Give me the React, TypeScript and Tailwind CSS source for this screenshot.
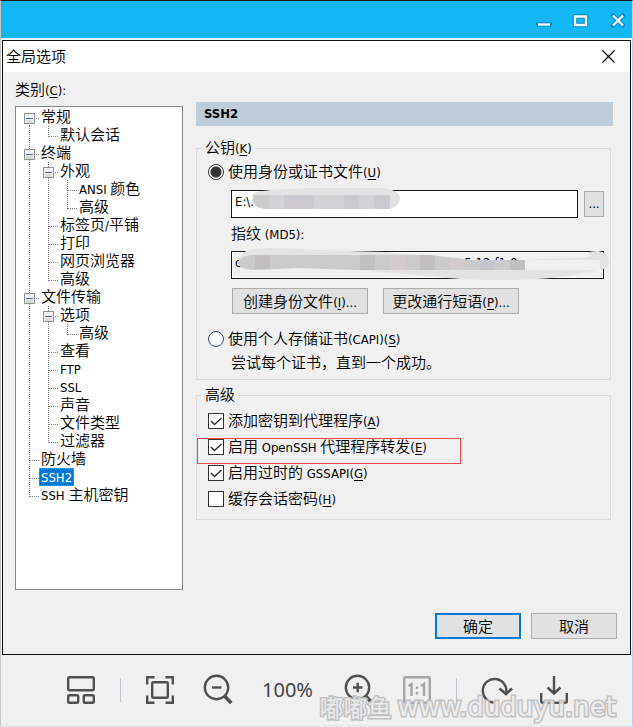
import { useState, type ReactNode } from 'react'

const CJK = "font-['Noto_Sans_CJK_SC','Noto_Sans',sans-serif]"
const LATIN = "font-['DejaVu_Sans_Condensed','DejaVu_Sans',sans-serif]"

interface TreeRow {
  label: string
  // one entry per column: v = line passes by, t = branch, l = last branch,
  // f = first expander, m = expander with a line above
  guides: string
}

const tree: TreeRow[] = [
  { label: '常规', guides: 'f' },
  { label: '默认会话', guides: 'vl' },
  { label: '终端', guides: 'm' },
  { label: '外观', guides: 'vm' },
  { label: 'ANSI 颜色', guides: 'vvt' },
  { label: '高级', guides: 'vvl' },
  { label: '标签页/平铺', guides: 'vt' },
  { label: '打印', guides: 'vt' },
  { label: '网页浏览器', guides: 'vt' },
  { label: '高级', guides: 'vl' },
  { label: '文件传输', guides: 'm' },
  { label: '选项', guides: 'vm' },
  { label: '高级', guides: 'vvl' },
  { label: '查看', guides: 'vt' },
  { label: 'FTP', guides: 'vt' },
  { label: 'SSL', guides: 'vt' },
  { label: '声音', guides: 'vt' },
  { label: '文件类型', guides: 'vt' },
  { label: '过滤器', guides: 'vl' },
  { label: '防火墙', guides: 't' },
  { label: 'SSH2', guides: 't' },
  { label: 'SSH 主机密钥', guides: 'l' },
]

// Latin runs are set smaller than the Chinese around them
function Mixed({ text, hotkey, after = '' }: { text: string; hotkey?: string; after?: string }) {
  return (
    <span className="whitespace-pre pb-[2px]">
      {text.split(/([\x20-\x7e]+)/).map((part, i) =>
        i % 2 ? <span key={i} className={`text-[13px] leading-none ${LATIN}`}>{part}</span> : part
      )}
      {hotkey && (
        <span className={`text-[13px] leading-none ${LATIN}`}>
          (<span className="underline underline-offset-2">{hotkey}</span>){after}
        </span>
      )}
    </span>
  )
}

function Guide({ kind }: { kind: string }) {
  const box = kind === 'f' || kind === 'm'
  const top = kind === 'f' ? 11 : 0
  const bottom = kind === 'l' ? 11 : 18
  return (
    <svg width="19" height="18" viewBox="0 0 19 18" className="shrink-0" shapeRendering="crispEdges" aria-hidden="true">
      <path d={`M9.5 ${top}V${bottom}`} stroke="#7a7a7a" strokeDasharray="1 1" />
      {kind !== 'v' && <path d="M10 10.5H19" stroke="#7a7a7a" strokeDasharray="1 1" />}
      {box && (
        <>
          <rect x="4.5" y="5.5" width="10" height="10" fill="#f4f4f4" stroke="#919191" />
          <path d="M6 13.5H13" stroke="#dcdcdc" strokeWidth="3" />
          <path d="M6 10.5H13" stroke="#4b63a7" />
        </>
      )}
    </svg>
  )
}

function Group({ title, hotkey, children }: { title: string; hotkey?: string; children: ReactNode }) {
  return (
    <fieldset className="mr-[2px] border border-[#dcdcdc] pl-[11px] pr-[6px]">
      <legend className="-ml-[6px] px-[3px] pb-[2px] leading-4">
        <Mixed text={title} hotkey={hotkey} />
      </legend>
      {children}
    </fieldset>
  )
}

function Radio({ label, hotkey, defaultChecked }: { label: string; hotkey: string; defaultChecked?: boolean }) {
  return (
    <label className="flex items-center gap-1 leading-4">
      <input
        type="radio"
        name="identity"
        defaultChecked={defaultChecked}
        className="size-4 appearance-none rounded-full border border-[#34508a] bg-white checked:border-[#333] checked:bg-[radial-gradient(circle,#333_5px,#fff_6px)]"
      />
      <Mixed text={label} hotkey={hotkey} />
    </label>
  )
}

function Check({ label, hotkey, defaultChecked }: { label: string; hotkey: string; defaultChecked?: boolean }) {
  return (
    <label className="flex items-center gap-1 leading-6">
      <span className="grid">
        <input
          type="checkbox"
          defaultChecked={defaultChecked}
          className="peer col-start-1 row-start-1 size-4 appearance-none border border-[#333] bg-white"
        />
        <svg viewBox="0 0 16 16" className="pointer-events-none col-start-1 row-start-1 hidden size-4 peer-checked:block" fill="none" stroke="#333" strokeWidth="1.5">
          <path d="M3 8l3.5 3.5L13.5 5" />
        </svg>
      </span>
      <Mixed text={label} hotkey={hotkey} />
    </label>
  )
}

const greyButton = 'border border-[#adadad] bg-[#e1e1e1] leading-6'
const toolIcon = { width: 28, height: 28, viewBox: '0 0 28 28', fill: 'none', stroke: '#505050', strokeWidth: 2.4 }

function TitleButton({ label, children }: { label: string; children: ReactNode }) {
  return (
    <button aria-label={label} className="grid w-[29px] place-items-center">
      <svg width="18" height="18" viewBox="0 0 18 18" fill="none">
        <g stroke="#0b86c0" strokeWidth="4.4" strokeLinejoin="round" strokeLinecap="round">{children}</g>
        <g stroke="#f4fbff" strokeWidth="2.4">{children}</g>
      </svg>
    </button>
  )
}

function Separator() {
  return <div className="-mx-[5px] h-6 w-px bg-[#c3c3cf]" />
}

function Toolbar() {
  return (
    <footer className="flex flex-1 items-center justify-center gap-[30px] bg-[#f0f0f0] py-5 pl-[2px]">
      <button aria-label="布局">
        <svg {...toolIcon}>
          <rect x="1.2" y="1.2" width="25.6" height="13" rx="1.5" />
          <rect x="1.2" y="19.2" width="10" height="7.6" rx="1" />
          <rect x="16.8" y="19.2" width="10" height="7.6" rx="1" />
        </svg>
      </button>
      <Separator />
      <button aria-label="适应窗口">
        <svg {...toolIcon}>
          <rect x="6.2" y="6.2" width="15.6" height="15.6" rx="1" />
          <path d="M1.2 8.5V1.2H8.5M19.5 1.2H26.8V8.5M26.8 19.5V26.8H19.5M8.5 26.8H1.2V19.5" />
        </svg>
      </button>
      <button aria-label="缩小">
        <svg {...toolIcon} className="overflow-visible">
          <circle cx="12.5" cy="11.5" r="11.7" />
          <path d="M8 11.5H17.5" />
          <path d="M20.5 20L27.3 27" strokeWidth="3.6" />
        </svg>
      </button>
      <span className="w-[53px] font-['Noto_Sans',sans-serif] text-xl font-normal leading-7 text-[#444]">100%</span>
      <button aria-label="放大">
        <svg {...toolIcon} className="overflow-visible">
          <circle cx="12.5" cy="11.5" r="11.7" />
          <path d="M8 11.5H17.5M12.7 6.7V16.3" />
          <path d="M20.5 20L27.3 27" strokeWidth="3.6" />
        </svg>
      </button>
      <button aria-label="原始大小">
        <svg {...toolIcon} stroke="#a6a6a6">
          <rect x="1.2" y="1.2" width="25.6" height="25.6" rx="1" />
          <path d="M5.5 10L8.5 8V20M18 10L21 8V20M14 10.5V13M14 16V18.5" />
        </svg>
      </button>
      <Separator />
      <button aria-label="旋转">
        <svg {...toolIcon} className="overflow-visible">
          <path d="M11.5 26.5A11.8 11.8 0 1 1 24.3 16" />
          <path d="M17.5 12.5L24 18L30 12.5" strokeWidth="2.8" />
        </svg>
      </button>
      <button aria-label="下载">
        <svg {...toolIcon}>
          <path d="M14 0V17.5M7.5 11.5L14 17.5L20.5 11.5M1.2 17V25Q1.2 26.8 3 26.8H25Q26.8 26.8 26.8 25V17" />
        </svg>
      </button>
    </footer>
  )
}

export default function App() {
  const [selected, setSelected] = useState(20)

  return (
    <div className={`relative flex min-h-screen flex-col border-b-2 border-l border-r border-t border-b-[#dcecf5] border-l-[#c4c6c8] border-r-[#9fd8f2] border-t-[#1c1c1c] bg-[#f7fbfd] text-[15px] font-[350] text-black ${CJK}`}>
      <header className="flex h-[37px] justify-end gap-2 bg-[#13b7f6] pt-[2px]">
        <TitleButton label="最小化"><path d="M3 12.5H15" /></TitleButton>
        <TitleButton label="最大化"><path d="M3 4.5H14V13H3Z" /></TitleButton>
        <TitleButton label="关闭"><path d="M4 3.5L14 13.5M14 3.5L4 13.5" /></TitleButton>
      </header>

      <main className="ml-px mr-px mt-[2px] border border-[#111] bg-[#f0f0f0]">
        <div className="flex h-[31px] items-center justify-between bg-white pl-[3px] pr-[15px]">
          <h1 className="pb-[2px] leading-7">全局选项</h1>
          <button aria-label="关闭对话框">
            <svg width="13" height="13" viewBox="0 0 13 13" stroke="#000" strokeWidth="1.2"><path d="M.5 .5L12.5 12.5M12.5 .5L.5 12.5" /></svg>
          </button>
        </div>

        <div className="flex gap-[13px] pl-3 pr-[17px] pt-2">
          <section className="w-[168px] shrink-0">
            <h2 className="mb-2 leading-[18px]"><Mixed text="类别" hotkey="C" after=":" /></h2>
            <ul className="min-h-[484px] border border-[#828790] bg-white pl-1 pt-px">
              {tree.map((row, i) => (
                <li key={i} className="flex h-[18px]">
                  {row.guides.split('').map((kind, j) => <Guide key={j} kind={kind} />)}
                  <button
                    onClick={() => setSelected(i)}
                    className={`px-px pb-[2px] leading-[14px] ${selected === i ? 'border border-dotted border-[#e08a2a] bg-[#0078d7] text-white' : 'border border-transparent'}`}
                  >
                    <Mixed text={row.label} />
                  </button>
                </li>
              ))}
            </ul>
          </section>

          <section className="min-w-0 flex-1 pt-[22px]">
            <h2 className={`mb-[13px] bg-[#bfccda] pl-2 text-[13px] font-bold leading-6 ${LATIN}`}>SSH2</h2>

            <Group title="公钥" hotkey="K">
              <div className="pt-[6px]">
                <Radio label="使用身份或证书文件" hotkey="U" defaultChecked />
              </div>
              <div className="relative mt-[9px] flex items-center gap-[6px] pl-[23px]">
                <input
                  aria-label="身份文件"
                  defaultValue="E:\."
                  className={`h-7 min-w-0 flex-1 border border-[#1a1a1a] bg-white pb-[5px] pl-[3px] text-[13px] ${LATIN}`}
                />
                <button aria-label="浏览" className={`w-5 text-[13px] ${greyButton} ${LATIN}`}>...</button>
                <svg width="150" height="22" viewBox="0 0 150 22" className="pointer-events-none absolute -top-[2px] left-[44px]">
                  <path d="M3 4Q20 1 60 0H128Q147 1 148 10Q147 21 134 21H14Q2 20 0 12Q0 6 3 4Z" fill="#e3e3e3" />
                  <path d="M8 7H138V21H14Q2 20 1 12Q2 8 8 7Z" fill="#d3d2d4" />
                  <path d="M2 7H17V21H14Q2 20 1 12Z" fill="#cbcbcb" />
                  <path d="M32 7H62V21H32ZM92 7H107V21H92ZM122 7H138V21H122Z" fill="#cdcacf" />
                </svg>
              </div>
              <label htmlFor="fingerprint" className="mt-[6px] block pb-[2px] pl-[23px] leading-[18px]"><Mixed text="指纹 (MD5):" /></label>
              <div className="relative mt-[6px] pl-[23px]">
                <input
                  id="fingerprint"
                  readOnly
                  value={`c${' '.repeat(60)}5:12:f1:0e`}
                  className={`h-7 w-full border border-[#1a1a1a] bg-[#f0f0f0] pb-[5px] pl-[3px] text-[13px] shadow-[inset_0_0_0_1px_#fff] ${LATIN}`}
                />
                <svg width="372" height="33" viewBox="0 0 372 33" className="pointer-events-none absolute -top-[3px] left-[30px]">
                  <path d="M0 16Q2 6 10 3Q40 -1 75 3L147 5L190 9L225 13H287L352 10Q345 4 360 4Q371 6 371 15Q370 23 360 23L335 28Q310 33 260 33Q220 33 190 29L120 23L60 21L15 23Q2 22 0 16Z" fill="#e3e3e3" />
                  <path d="M287 13H362V23H287Z" fill="#f0f0f0" />
                  <path d="M0 16Q3 8 15 8H192L232 13H287V23H120L60 21L15 23Q2 22 0 16Z" fill="#cbcbcb" />
                  <path d="M17 8H32V22H17ZM122 8H137V23H122ZM182 8H192L197 9V23H182ZM272 13H287V23H272Z" fill="#c1bfc0" />
                  <path d="M152 8H167V23H152ZM212 11L227 12V23H212Z" fill="#d2cccd" />
                  <path d="M242 13H257V23H242Z" fill="#c6c4cc" />
                </svg>
              </div>
              <div className="mt-[9px] flex gap-[15px] pl-6">
                <button className={`w-[136px] ${greyButton}`}><Mixed text="创建身份文件" hotkey="I" after="..." /></button>
                <button className={`w-[136px] ${greyButton}`}><Mixed text="更改通行短语" hotkey="P" after="..." /></button>
              </div>
              <div className="mt-4">
                <Radio label="使用个人存储证书(CAPI)" hotkey="S" />
              </div>
              <p className="mb-2 mt-[5px] pl-[23px] leading-[18px]">尝试每个证书，直到一个成功。</p>
            </Group>

            <div className="mt-[6px]">
              <Group title="高级">
                <div className="relative pb-[7px] pt-[4px]">
                  <Check label="添加密钥到代理程序" hotkey="A" defaultChecked />
                  <Check label="启用 OpenSSH 代理程序转发" hotkey="E" defaultChecked />
                  <Check label="启用过时的 GSSAPI" hotkey="G" defaultChecked />
                  <Check label="缓存会话密码" hotkey="H" />
                  <div className="pointer-events-none absolute -left-[11px] top-[34px] h-[26px] w-[264px] border border-[#f04a4a]" />
                </div>
              </Group>
            </div>
          </section>
        </div>

        <div className="flex justify-end gap-[10px] pb-[15px] pr-[13px] pt-[23px]">
          <button className="w-[86px] border-2 border-[#0078d7] bg-[#e1e1e1] leading-[22px]">确定</button>
          <button className={`w-[86px] ${greyButton}`}>取消</button>
        </div>
      </main>

      <Toolbar />

      <div className="pointer-events-none absolute bottom-[2px] right-4 flex items-center gap-[6px] font-normal text-[#ececec] opacity-90 [-webkit-text-stroke:3px_#bcbcbc] [paint-order:stroke]">
        <span className="text-2xl leading-8">嘟嘟鱼</span>
        <span className="font-['DejaVu_Sans',sans-serif] text-[26px] leading-8">www.duduyu.net</span>
      </div>
    </div>
  )
}
